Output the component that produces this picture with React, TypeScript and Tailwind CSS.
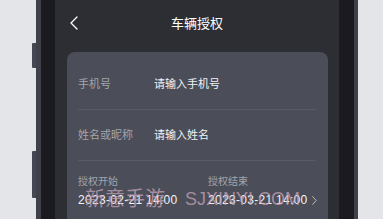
import { ChevronLeft } from 'lucide-react';

const font = { fontFamily: '"Liberation Sans", "Noto Sans CJK SC", sans-serif' };

function FieldRow({ label, placeholder }: { label: string; placeholder: string }) {
  return (
    <div className="flex h-[51px] items-center border-b border-[#585b65]">
      <span className="w-[76px] text-[11px] text-[#a3a5ad]">{label}</span>
      <span className="text-[11px] text-[#f2f2f4]">{placeholder}</span>
    </div>
  );
}

function DateField({ label, value, arrow }: { label: string; value: string; arrow?: boolean }) {
  return (
    <div className={arrow ? 'flex-1' : 'w-[130px]'}>
      <div className="text-[10px] leading-[14px] text-[#a3a5ad]">{label}</div>
      <div className="mt-[3px] flex items-center justify-between whitespace-nowrap text-[12px] leading-[16px] tracking-[0.3px] text-[#f4f4f6]">
        <span>{value}</span>
        {arrow && (
          <svg width="5" height="9" viewBox="0 0 5 9" fill="none" className="mr-[-1px]">
            <path d="M0.6 0.6 L4.2 4.5 L0.6 8.4" stroke="#b8bac0" strokeWidth="1" strokeLinecap="round" strokeLinejoin="round" />
          </svg>
        )}
      </div>
    </div>
  );
}

export default function App() {
  return (
    <div className="flex h-[219px] w-[383px] overflow-hidden bg-[#e4e5e9]" style={font}>
      <div className="relative ml-[36px] flex w-[322px] shrink-0 border-l-[5px] border-r-[4px] border-[#3e414a]">
        {/* side buttons */}
        <div className="absolute left-[-9px] top-[43px] h-[25px] w-[4px] rounded-l-[1px] bg-[#454853]" />
        <div className="absolute left-[-9px] top-[151px] h-[47px] w-[4px] rounded-l-[1px] bg-[#454853]" />

        <div className="flex flex-1 bg-[#1b1b1f] pl-[14px] pr-[15px]">
          <div className="relative flex flex-1 flex-col bg-[#2d2e33]">
            {/* header */}
            <div className="grid h-[46px] grid-cols-[1fr_auto_1fr] items-center">
              <ChevronLeft className="ml-[7px] h-[24px] w-[24px] text-white" strokeWidth={1.3} />
              <span className="pt-[1px] text-[13px] text-white">车辆授权</span>
              <span />
            </div>

            {/* form card */}
            <div className="ml-[12px] mr-[11px] mt-[6px] flex-1 rounded-t-[8px] bg-[#4b4e58] pl-[11px] pr-[12px] pt-[7px]">
              <FieldRow label="手机号" placeholder="请输入手机号" />
              <FieldRow label="姓名或昵称" placeholder="请输入姓名" />
              <div className="flex items-start pt-[14px]">
                <DateField label="授权开始" value="2023-02-21 14:00" />
                <DateField label="授权结束" value="2023-03-21 14:00" arrow />
              </div>
            </div>

            {/* watermark */}
            <div className="pointer-events-none absolute left-[30px] top-[187px] flex items-center gap-[20px] whitespace-nowrap text-[#c4a3b8]/75">
              <span className="text-[20px] leading-[24px]">新意手游</span>
              <span className="text-[18px] leading-[24px]">SJXINYI.COM</span>
            </div>
          </div>
        </div>
      </div>
    </div>
  );
}
